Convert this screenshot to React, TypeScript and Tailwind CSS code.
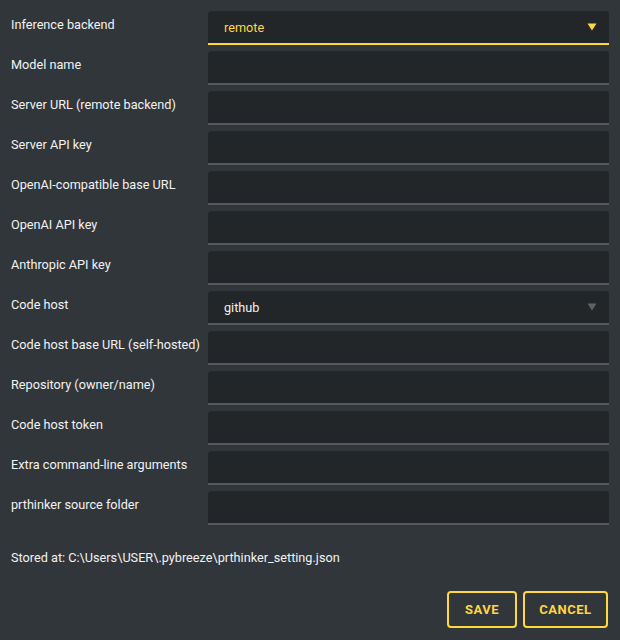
import React from "react";

const fields: { label: string; kind?: "select"; value?: string; active?: boolean }[] = [
  { label: "Inference backend", kind: "select", value: "remote", active: true },
  { label: "Model name" },
  { label: "Server URL (remote backend)" },
  { label: "Server API key" },
  { label: "OpenAI-compatible base URL" },
  { label: "OpenAI API key" },
  { label: "Anthropic API key" },
  { label: "Code host", kind: "select", value: "github" },
  { label: "Code host base URL (self-hosted)" },
  { label: "Repository (owner/name)" },
  { label: "Code host token" },
  { label: "Extra command-line arguments" },
  { label: "prthinker source folder" },
];

function Arrow({ active }: { active?: boolean }) {
  return (
    <svg width="10" height="8" viewBox="0 0 10 8" className="shrink-0">
      <path d="M0.5 0.5 H9.5 L5 7.5 Z" fill={active ? "#ffd740" : "#5f6266"} />
    </svg>
  );
}

function Field({ kind, value, active }: { kind?: "select"; value?: string; active?: boolean }) {
  return (
    <div
      className={
        "flex h-[34px] flex-1 items-center rounded-t-[4px] border-b-2 bg-[#232629] pl-[16px] pr-[12px] " +
        (active ? "border-[#ffd740]" : "border-[#55585c]")
      }
    >
      {kind === "select" && (
        <>
          <span className={"flex-1 pt-[1px] text-[12.7px] " + (active ? "text-[#ffd740]" : "text-[#f2f2f2]")}>{value}</span>
          <Arrow active={active} />
        </>
      )}
    </div>
  );
}

export default function App() {
  return (
    <div
      className="flex h-[640px] w-[620px] flex-col bg-[#31363b] px-[11px] pt-[11px] text-[#f2f2f2]"
      style={{ fontFamily: "Roboto, 'Liberation Sans', sans-serif" }}
    >
      <div className="flex flex-col gap-[6px]">
        {fields.map((f) => (
          <div key={f.label} className="flex">
            <div className="w-[197px] shrink-0 pt-[6px] text-[12.7px] leading-[16px]">{f.label}</div>
            <Field kind={f.kind} value={f.value} active={f.active} />
          </div>
        ))}
      </div>
      <div className="mt-[25px] text-[12.7px] leading-[16px]">
        Stored at: C:\Users\USER\.pybreeze\prthinker_setting.json
      </div>
      <div className="mt-[25px] flex justify-end gap-[6px] pr-[1px]">
        <button className="h-[37px] w-[70px] rounded-[4px] border-2 border-[#ffd740] text-[13px] font-bold tracking-[0.5px] text-[#ffd740]">
          SAVE
        </button>
        <button className="h-[37px] w-[85px] rounded-[4px] border-2 border-[#ffd740] text-[13px] font-bold tracking-[0.5px] text-[#ffd740]">
          CANCEL
        </button>
      </div>
    </div>
  );
}
